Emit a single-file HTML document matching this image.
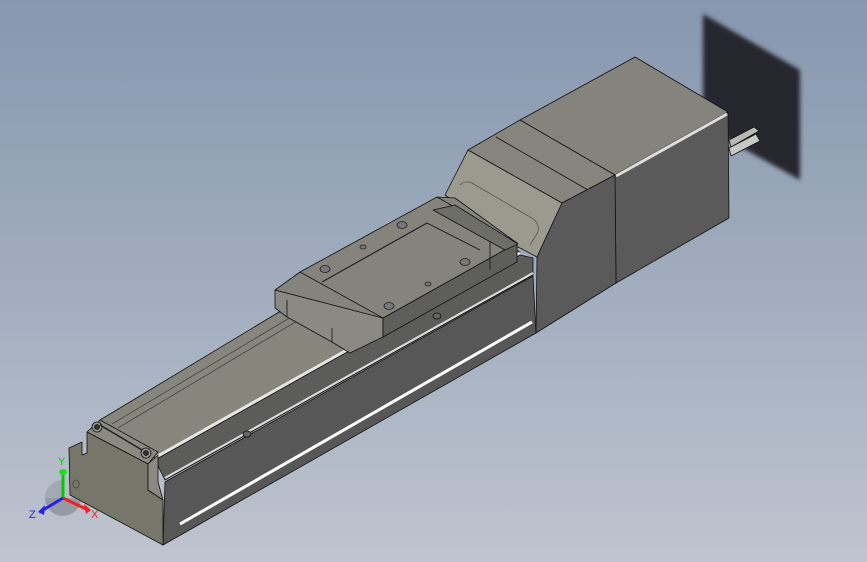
<!DOCTYPE html>
<html><head><meta charset="utf-8"><style>
html,body{margin:0;padding:0;width:867px;height:562px;overflow:hidden}
body{background:linear-gradient(180deg,#8797ae 0%,#a3afc0 55%,#bfc4cf 100%)}
svg{position:absolute;left:0;top:0}
</style></head><body>
<svg width="867" height="562" viewBox="0 0 867 562" xmlns="http://www.w3.org/2000/svg" font-family="Liberation Sans, sans-serif">
<defs><filter id="b"><feGaussianBlur stdDeviation="2"/></filter></defs>
<g stroke="#111" stroke-width="0.8" stroke-linejoin="round">
<polygon points="703,14 800,70 800,180 703,126" fill="#25282e" stroke="none" filter="url(#b)"/>
<polygon points="729,140 754,127 759,131 731,147" fill="#b8b8b4"/>
<polygon points="729,148 756,134 760,141 731,156" fill="#c8c8c4"/>
<polygon points="520,120 635,57 728,112 615,175" fill="#84847c"/>
<polygon points="615,175 728,112 729,218 616,283" fill="#5a5a5a"/>
<line x1="616" y1="176" x2="727" y2="114" stroke="#ddd" stroke-width="3"/>
<polygon points="468,150 520,120 615,175 562,203" fill="#86867e"/>
<line x1="496" y1="137" x2="588" y2="190"/>
<polygon points="468,150 562,203 537,257 518,247 445,195" fill="#9a9a8e"/>
<path d="M460,185 Q464,180 472,183 L530,217 Q540,222 538,232 L530,245" fill="none" stroke="#555"/>
<polygon points="537,257 562,203 615,175 616,283 536,333" fill="#5a5a5a"/>
<polygon points="100,420 445,212 520,252 155,458" fill="#86867c"/>
<line x1="112" y1="424" x2="440" y2="228" stroke="#444"/>
<line x1="118" y1="428" x2="446" y2="232" stroke="#444"/>
<line x1="156" y1="457" x2="520" y2="253" stroke="#e6e6e0" stroke-width="3"/>
<polygon points="155,460 520,255 533,258 533,275 165,480" fill="#5c5c5a"/>
<line x1="165" y1="478" x2="533" y2="273" stroke="#ddd" stroke-width="2"/>
<polygon points="165,482 533,276 536,333 163,545" fill="#575757"/>
<line x1="180" y1="524" x2="532" y2="322" stroke="#fff" stroke-width="3"/>
<ellipse cx="247" cy="434" rx="4" ry="3" fill="#666"/>
<ellipse cx="437" cy="316" rx="4" ry="3" fill="#666"/>
<polygon points="87,432 100,420 158,452 148,464" fill="#8a8a80"/>
<polygon points="69,448 82,442 82,455 87,453 87,432 148,464 148,490 163,500 163,545 70,495" fill="#76766a"/>
<polygon points="148,464 158,455 158,482 163,500 148,490" fill="#8a8a80"/>
<circle cx="97" cy="427" r="5" fill="#999"/><circle cx="97" cy="427" r="2.5" fill="#333"/>
<circle cx="146" cy="453" r="5" fill="#999"/><circle cx="146" cy="453" r="2.5" fill="#333"/>
<line x1="100" y1="425" x2="142" y2="450" stroke="#222" stroke-width="1.5"/>
<ellipse cx="76" cy="484" rx="3" ry="4" fill="none" stroke="#444"/>
<!-- carriage -->
<polygon points="275,290 383,318 383,337 350,353 332,342 287,317 275,308" fill="#8a8a82"/>
<line x1="287" y1="317" x2="287" y2="300"/>
<line x1="332" y1="342" x2="332" y2="328"/>
<polygon points="383,318 517,243 517,262 383,337" fill="#5e5e5a"/>
<polygon points="275,290 300,272 437,197 455,198 517,243 383,318" fill="#84847c"/>
<line x1="300" y1="272" x2="383" y2="318"/>
<line x1="437" y1="197" x2="517" y2="243"/>
<line x1="322" y1="282" x2="427" y2="223" stroke="#222" stroke-width="1.2"/>
<line x1="427" y1="223" x2="480" y2="250"/>
<line x1="490" y1="240" x2="490" y2="270"/>
<polygon points="433,210 455,205 518,244 505,250" fill="#6e6e68"/>
<g fill="#777" stroke="#222">
<ellipse cx="325" cy="269" rx="5" ry="3.5"/><ellipse cx="402" cy="225" rx="5" ry="3.5"/>
<ellipse cx="389" cy="306" rx="5" ry="3.5"/><ellipse cx="465" cy="262" rx="5" ry="3.5"/>
<ellipse cx="363" cy="247" rx="3" ry="2"/><ellipse cx="428" cy="284" rx="3" ry="2"/>
</g>
</g>
<path d="M45,498 A18,18 0 0 0 81,498 Z" fill="#555" opacity="0.35"/>
<path d="M63,480 A18,18 0 0 0 45,498 L63,498 Z" fill="#777" opacity="0.3"/>
<line x1="63" y1="498" x2="63" y2="474" stroke="#0c0" stroke-width="3"/>
<ellipse cx="63" cy="472" rx="4" ry="3" fill="#2d2"/>
<line x1="63" y1="498" x2="86" y2="509" stroke="#e22" stroke-width="3"/>
<polygon points="84,504 91,510 86,514" fill="#e22"/>
<line x1="63" y1="498" x2="43" y2="510" stroke="#22e" stroke-width="3"/>
<polygon points="45,505 38,512 44,515" fill="#22e"/>
<text x="58" y="465" font-size="11" fill="#0c0">Y</text>
<text x="91" y="518" font-size="11" fill="#e22">X</text>
<text x="29" y="518" font-size="11" fill="#22e">Z</text>
</svg>
</body></html>
